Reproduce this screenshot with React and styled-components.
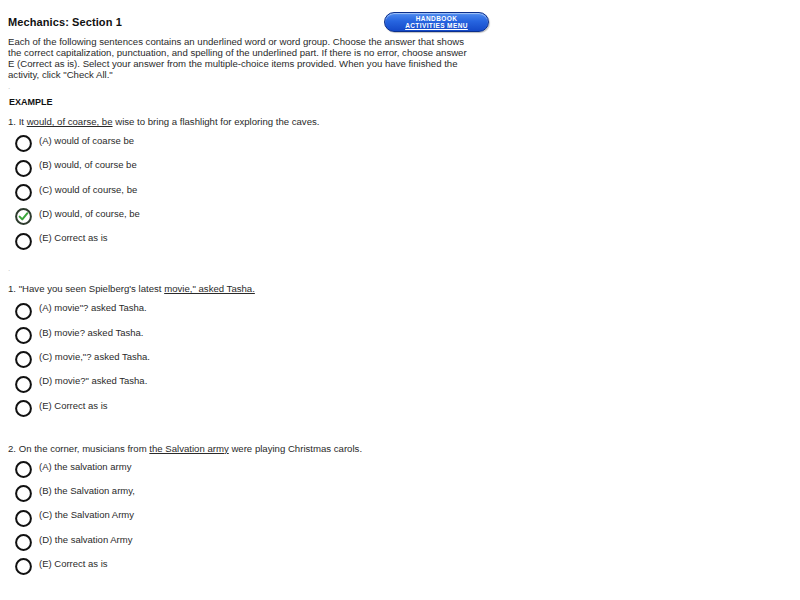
import React from 'react';
import styled, { createGlobalStyle } from 'styled-components';

const GlobalStyle = createGlobalStyle`
  html, body {
    margin: 0;
    padding: 0;
    background: #ffffff;
  }
  body {
    font-family: 'Liberation Sans', Arial, sans-serif;
    color: #2a2a2a;
  }
`;

const Page = styled.div`
  width: 800px;
  height: 600px;
  padding: 12px 0 0 8px;
  box-sizing: border-box;
  overflow: hidden;
`;

const Header = styled.div`
  display: flex;
  align-items: center;
  justify-content: space-between;
  width: 481px;
  height: 20px;
`;

const Title = styled.h1`
  margin: 0;
  font-size: 11px;
  font-weight: bold;
  color: #111;
  letter-spacing: 0.1px;
`;

const MenuButton = styled.button`
  width: 105px;
  height: 20px;
  padding: 0;
  border: 1px solid #0b2f8c;
  border-radius: 10px;
  background: linear-gradient(#4f8cf0 0%, #2765e0 45%, #1449c8 100%);
  box-shadow: inset 0 1px 1px rgba(255, 255, 255, 0.5), 1px 1px 1px rgba(0, 0, 0, 0.25);
  color: #ffffff;
  font-family: 'Liberation Sans', Arial, sans-serif;
  font-size: 6.5px;
  font-weight: bold;
  line-height: 7.5px;
  letter-spacing: 0.4px;
  text-align: center;
  cursor: pointer;
`;

const Under = styled.span`
  text-decoration: underline;
`;

const Intro = styled.p`
  margin: 3.5px 0 0;
  width: 540px;
  font-size: 9.6px;
  line-height: 11px;
`;

const Spacer = styled.div`
  height: 14px;
  margin-top: ${({ top }) => top}px;
  font-size: 8px;
  line-height: 14px;
  color: #bbb;
`;

const Heading = styled.div`
  margin-top: 2.5px;
  font-size: 9px;
  line-height: 12px;
  font-weight: bold;
  color: #111;
  padding-left: 1px;
`;

const Question = styled.div`
  margin-top: ${({ top }) => top}px;
  font-size: 9.6px;
  line-height: 12px;
`;

const Marked = styled.span`
  text-decoration: underline;
`;

const Options = styled.div`
  display: flex;
  flex-direction: column;
  margin-top: ${({ top }) => top}px;
  padding-left: 7px;
`;

const Option = styled.label`
  display: flex;
  align-items: center;
  height: 24.3px;
  gap: 7px;
  cursor: pointer;
`;

const Circle = styled.span`
  width: 17px;
  height: 17px;
  flex: none;
  display: flex;
  align-items: center;
  justify-content: center;
`;

const OptionText = styled.span`
  font-size: 9.5px;
  line-height: 12px;
  padding-bottom: 6px;
`;

const Radio = ({ checked }) => (
  <Circle>
    <svg width="17" height="17" viewBox="0 0 17 17">
      <circle cx="8.5" cy="8.5" r="7.4" fill="#fff" stroke={checked ? '#2d3a2d' : '#111'} strokeWidth="2" />
      {checked && (
        <path d="M4.6 8.6 L7.3 11.4 L12.4 5.2" fill="none" stroke="#3aa53a" strokeWidth="2" strokeLinecap="round" strokeLinejoin="round" />
      )}
    </svg>
  </Circle>
);

const OptionList = ({ items, checked, top }) => (
  <Options top={top}>
    {items.map((text, index) => (
      <Option key={text}>
        <Radio checked={checked === index} />
        <OptionText>{text}</OptionText>
      </Option>
    ))}
  </Options>
);

const App = () => (
  <Page>
    <GlobalStyle />
    <Header>
      <Title>Mechanics: Section 1</Title>
      <MenuButton>
        HANDBOOK
        <br />
        <Under>ACTIVITIES MENU</Under>
      </MenuButton>
    </Header>
    <Intro>
      Each of the following sentences contains an underlined word or word group. Choose the answer that shows
      <br />
      the correct capitalization, punctuation, and spelling of the underlined part. If there is no error, choose answer
      <br />
      E (Correct as is). Select your answer from the multiple-choice items provided. When you have finished the
      <br />
      activity, click "Check All."
    </Intro>
    <Spacer top={0}>.</Spacer>
    <Heading>EXAMPLE</Heading>
    <Question top={8}>
      1. It <Marked>would, of coarse, be</Marked> wise to bring a flashlight for exploring the caves.
    </Question>
    <OptionList
      top={3.85}
      checked={3}
      items={[
        '(A) would of coarse be',
        '(B) would, of course be',
        '(C) would of course, be',
        '(D) would, of course, be',
        '(E) Correct as is',
      ]}
    />
    <Spacer top={9}>.</Spacer>
    <Question top={7}>
      1. "Have you seen Spielberg's latest <Marked>movie," asked Tasha.</Marked>
    </Question>
    <OptionList
      top={3.85}
      items={[
        '(A) movie"? asked Tasha.',
        '(B) movie? asked Tasha.',
        '(C) movie,"? asked Tasha.',
        '(D) movie?" asked Tasha.',
        '(E) Correct as is',
      ]}
    />
    <Question top={21.85}>
      2. On the corner, musicians from <Marked>the Salvation army</Marked> were playing Christmas carols.
    </Question>
    <OptionList
      top={3}
      items={[
        '(A) the salvation army',
        '(B) the Salvation army,',
        '(C) the Salvation Army',
        '(D) the salvation Army',
        '(E) Correct as is',
      ]}
    />
  </Page>
);

export default App;
